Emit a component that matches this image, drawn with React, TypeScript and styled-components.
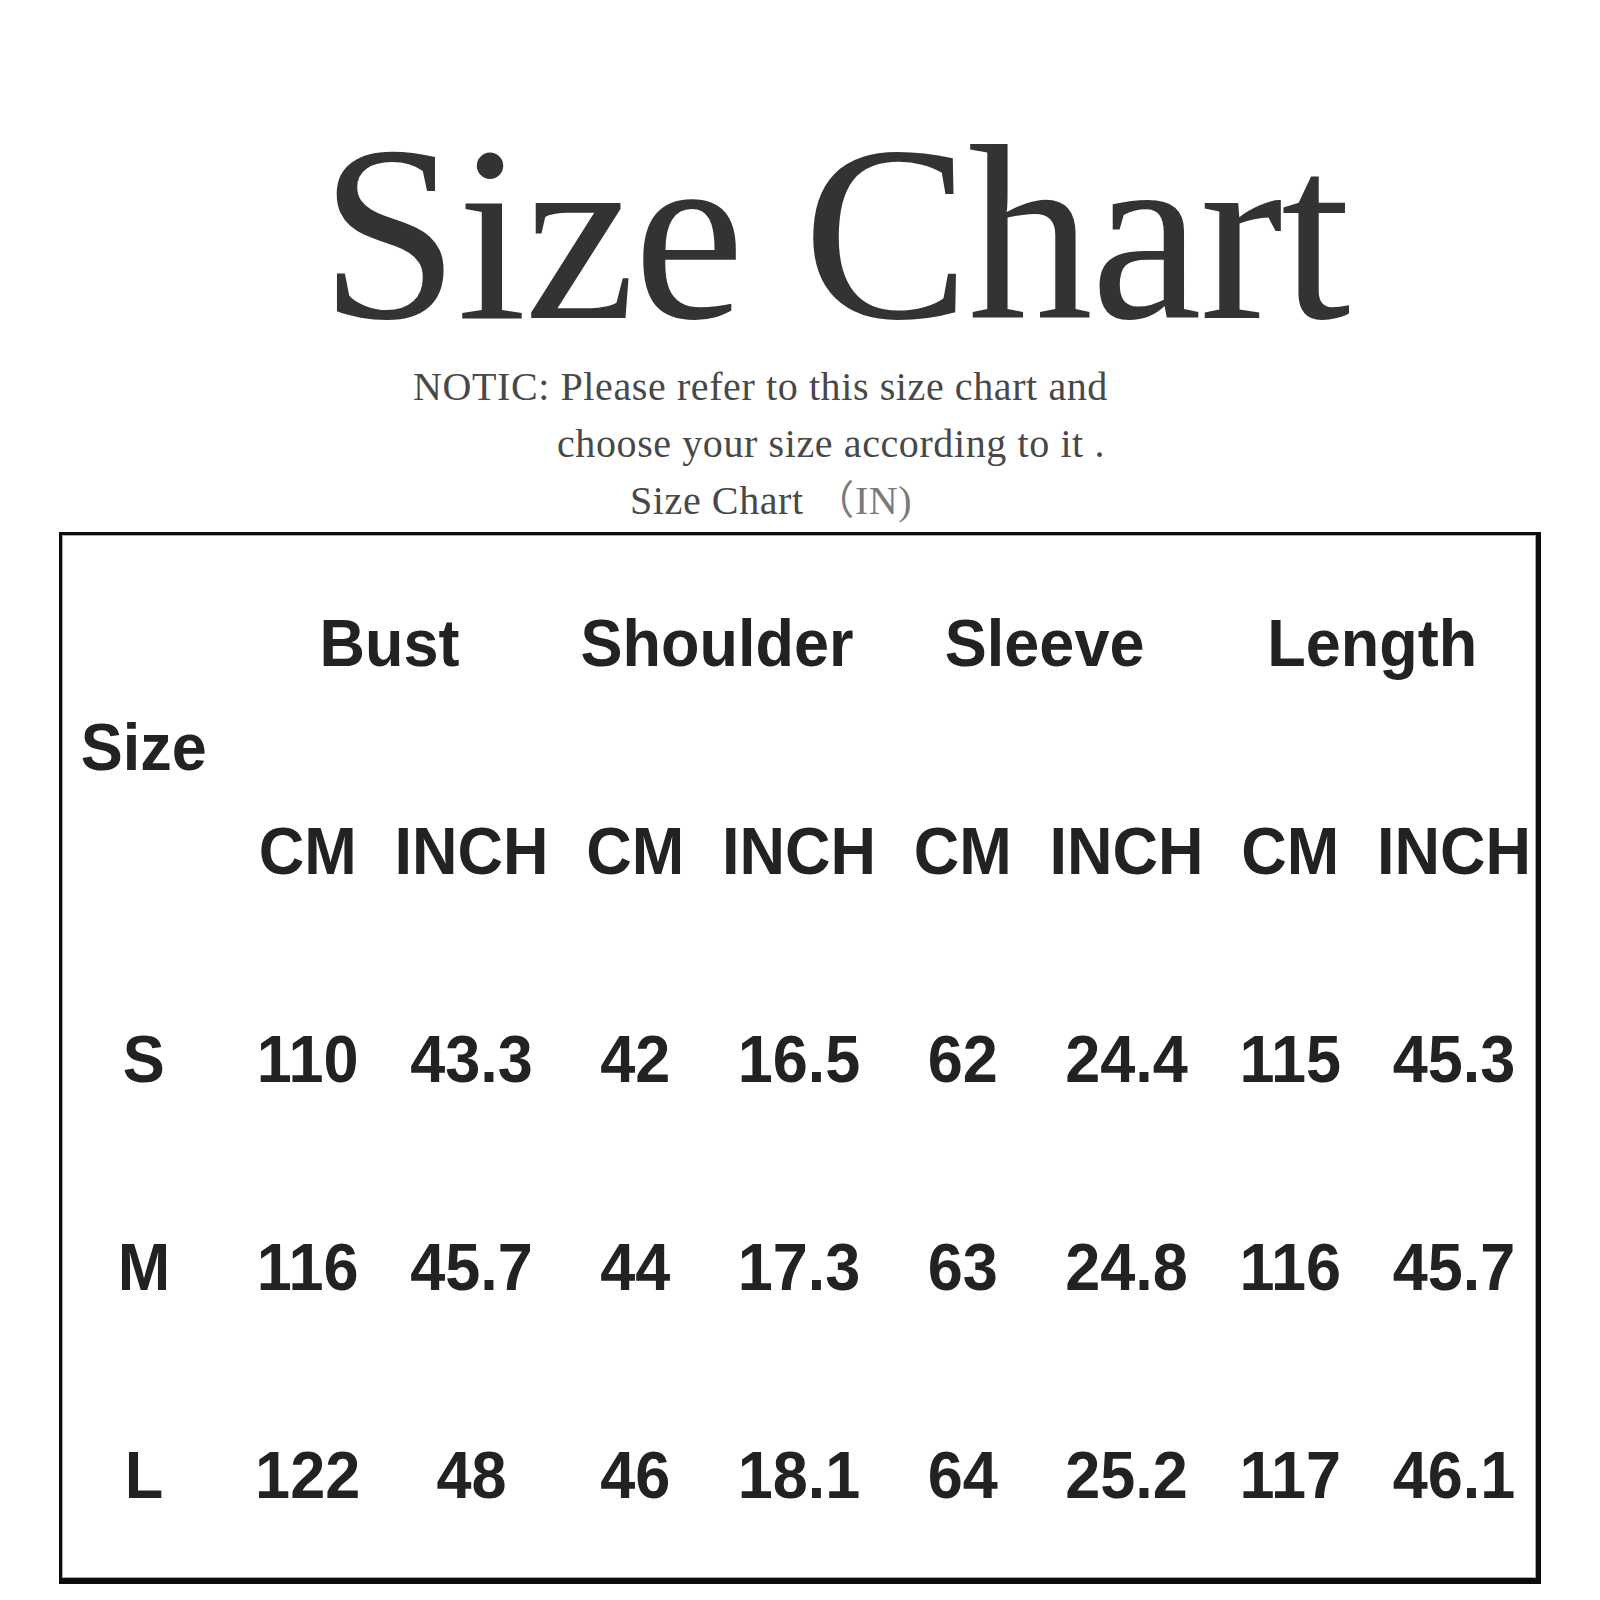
import React from 'react';
import styled, { createGlobalStyle } from 'styled-components';

const GlobalStyle = createGlobalStyle`
  body {
    margin: 0;
    background: #ffffff;
  }
`;

const Page = styled.div`
  width: 1600px;
  height: 1600px;
  background: #ffffff;
  display: flex;
  flex-direction: column;
`;

const Title = styled.h1`
  margin: 129px 0 0 0;
  padding-left: 320px;
  font-family: "Liberation Serif", "Times New Roman", serif;
  font-weight: normal;
  font-size: 250px;
  line-height: 210px;
  height: 210px;
  color: #333333;
  letter-spacing: -2px;
  white-space: nowrap;
`;

const Notice = styled.div`
  margin-top: 19px;
  display: flex;
  flex-direction: column;
  font-family: "Liberation Serif", "Times New Roman", "Noto Sans CJK SC", serif;
  font-size: 40px;
  line-height: 57px;
  letter-spacing: 0.6px;
  color: #484848;
`;

const NoticeLine = styled.div<{ $indent: number }>`
  padding-left: ${(p) => p.$indent}px;
  white-space: nowrap;
`;

const Unit = styled.span`
  color: #7a7a7a;
`;

const ChartBox = styled.div`
  margin: 3px 0 0 59px;
  width: 1482px;
  height: 1052px;
  box-sizing: border-box;
  border-style: solid;
  border-color: #0c0c0c;
  border-width: 3px 5px 6px 3px;
  box-shadow: inset 0 0 0 1px #a9a9a9;
  display: grid;
  grid-template-columns: repeat(9, 1fr);
  grid-template-rows: repeat(5, 1fr);
  padding-top: 3px;
`;

const Cell = styled.div<{ $rows?: number; $cols?: number }>`
  grid-row: span ${(p) => p.$rows ?? 1};
  grid-column: span ${(p) => p.$cols ?? 1};
  display: flex;
  align-items: center;
  justify-content: center;
  font-family: "Liberation Sans", Arial, sans-serif;
  font-weight: bold;
  font-size: 63px;
  color: #222222;
  white-space: nowrap;
  transform: scaleY(1.07);
`;

const groups = ['Bust', 'Shoulder', 'Sleeve', 'Length'];

const rows = [
  { size: 'S', values: ['110', '43.3', '42', '16.5', '62', '24.4', '115', '45.3'] },
  { size: 'M', values: ['116', '45.7', '44', '17.3', '63', '24.8', '116', '45.7'] },
  { size: 'L', values: ['122', '48', '46', '18.1', '64', '25.2', '117', '46.1'] },
];

const App = () => {
  return (
    <Page>
      <GlobalStyle />
      <Title>Size Chart</Title>
      <Notice>
        <NoticeLine $indent={413}>NOTIC: Please refer to this size chart and</NoticeLine>
        <NoticeLine $indent={557}>choose your size according to it .</NoticeLine>
        <NoticeLine $indent={630}>
          Size Chart <Unit>（IN)</Unit>
        </NoticeLine>
      </Notice>
      <ChartBox>
        <Cell $rows={2}>Size</Cell>
        {groups.map((g) => (
          <Cell key={g} $cols={2}>{g}</Cell>
        ))}
        {groups.map((g) => (
          <React.Fragment key={g}>
            <Cell>CM</Cell>
            <Cell>INCH</Cell>
          </React.Fragment>
        ))}
        {rows.map((r) => (
          <React.Fragment key={r.size}>
            <Cell>{r.size}</Cell>
            {r.values.map((v, i) => (
              <Cell key={i}>{v}</Cell>
            ))}
          </React.Fragment>
        ))}
      </ChartBox>
    </Page>
  );
};

export default App;
